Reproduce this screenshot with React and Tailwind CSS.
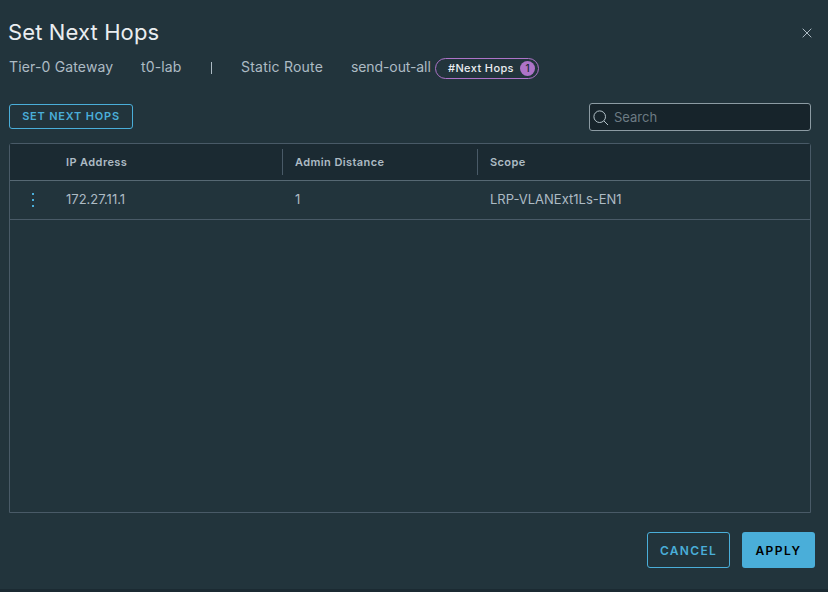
const columns = 'grid grid-cols-[56px_217px_195px_1fr] items-center';

function SearchIcon() {
  return (
    <svg className="mt-px ml-[3px] size-4 shrink-0" viewBox="0 0 16 16" fill="none" stroke="#b3c2c9" strokeWidth="1">
      <circle cx="6.7" cy="6.7" r="5.8" />
      <path d="M11 11l4 4" />
    </svg>
  );
}

export default function App() {
  return (
    <div className="flex h-[592px] w-[828px] flex-col overflow-hidden border-b-[3px] border-[#1b2a32] bg-[#22343c] font-['Inter',sans-serif] text-[#adbbc4]">
      <header className="flex h-12 items-center justify-between pt-[17px] pr-4 pl-2">
        <h1 className="pb-0.5 text-[22px] leading-[30px] tracking-[0.12px] whitespace-nowrap text-[#eaedf0]">Set Next Hops</h1>
        <button aria-label="Close" className="flex size-[10px] items-center justify-center">
          <svg className="size-[10px]" viewBox="0 0 10 10" stroke="#adbbc4" strokeWidth="1">
            <path d="M.7.7l8.6 8.6M9.3.7L.7 9.3" />
          </svg>
        </button>
      </header>

      <div className="flex h-10 items-center pl-[9px] text-sm whitespace-nowrap">
        <span className="w-[132px] pb-0.5 tracking-[0.16px]">Tier-0 Gateway</span>
        <span className="w-[70px] pb-0.5 tracking-[0.15px]">t0-lab</span>
        <span className="w-[30px]"><span className="block h-3 w-px bg-[#adbbc4]" /></span>
        <span className="w-[110px] pb-0.5 tracking-[0.22px]">Static Route</span>
        <span className="w-[84px] pb-0.5 tracking-[-0.1px]">send-out-all</span>
        <span className="flex h-[21px] w-[104px] items-center justify-between rounded-full border border-[#ad73c8] pr-[3px] pl-[12px] text-[11px] font-medium text-[#eaedf0]">
          <span className="pt-px tracking-[0.38px]">#Next Hops</span>
          <span className="flex size-[15px] items-center justify-center rounded-full bg-[#ad73c8] text-[10px] text-[#1b2a32]">1</span>
        </span>
      </div>

      <div className="flex h-[55px] items-start justify-between pt-[15px] pr-[17px] pl-[9px]">
        <button className="mt-px flex h-[25px] w-[124px] items-center justify-center rounded-[3px] border border-[#4aaed9] text-[11px] font-semibold tracking-[0.8px] whitespace-nowrap text-[#4aaed9]">
          SET NEXT HOPS
        </button>
        <label className="flex h-7 w-[222px] items-center gap-[5px] rounded-[3px] border border-[#8c9ba3] bg-[#17242b]">
          <SearchIcon />
          <span className="pt-0.5 text-[13px] text-[#6c7b83]">Search</span>
        </label>
      </div>

      <main className="mr-[17px] ml-[9px] h-[370px] rounded-t-[3px] border border-[#495a67]">
        <div className={`${columns} h-[37px] border-b border-[#566873] bg-[#1b2a32] text-[11px] font-semibold`}>
          <span />
          <span className="tracking-[0.4px]">IP Address</span>
          <span className="-ml-px flex h-[26px] items-center border-l border-[#495a67] pl-3 tracking-[0.4px]">Admin Distance</span>
          <span className="-ml-px flex h-[26px] items-center border-l border-[#495a67] pl-3 tracking-[0.4px]">Scope</span>
        </div>
        <div className={`${columns} h-[39px] border-b border-[#495a67] text-[13px]`}>
          <button aria-label="Row actions" className="flex flex-col items-center gap-1 pr-[10px]">
            <span className="size-[2px] bg-[#4aaed9]" />
            <span className="size-[2px] bg-[#4aaed9]" />
            <span className="size-[2px] bg-[#4aaed9]" />
          </button>
          <span>172.27.11.1</span>
          <span className="pl-3">1</span>
          <span className="pl-3">LRP-VLANExt1Ls-EN1</span>
        </div>
      </main>

      <footer className="flex justify-end gap-3 pt-[19px] pr-[13px]">
        <button className="h-9 w-[83px] rounded-[3px] border border-[#4aaed9] pt-0.5 text-xs font-semibold tracking-[1.3px] text-[#4aaed9]">CANCEL</button>
        <button className="h-9 w-[73px] rounded-[3px] bg-[#4aaed9] pt-0.5 text-xs font-semibold tracking-[1.5px] text-black">APPLY</button>
      </footer>
    </div>
  );
}
